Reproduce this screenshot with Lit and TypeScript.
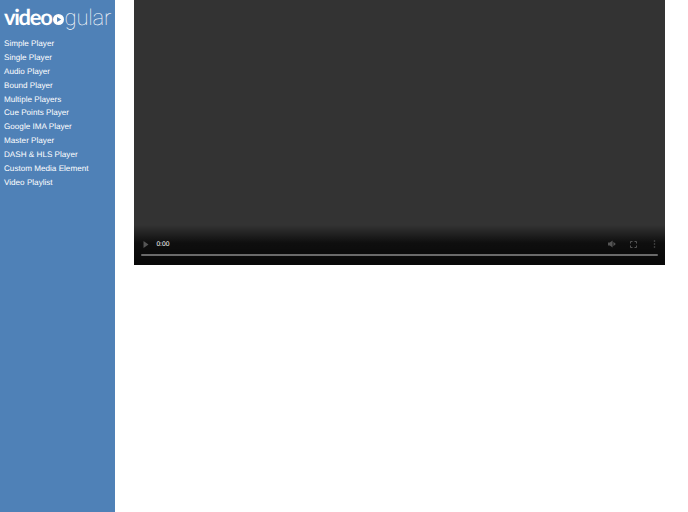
import { LitElement, html, css, svg } from "lit";
import { customElement } from "lit/decorators.js";

const LINKS = [
  "Simple Player",
  "Single Player",
  "Audio Player",
  "Bound Player",
  "Multiple Players",
  "Cue Points Player",
  "Google IMA Player",
  "Master Player",
  "DASH & HLS Player",
  "Custom Media Element",
  "Video Playlist",
];

@customElement("app-root")
export class AppRoot extends LitElement {
  static styles = css`
    :host {
      display: flex;
      width: 688px;
      height: 512px;
      overflow: hidden;
      background: #fff;
      font-family: "Liberation Sans", Arial, sans-serif;
      text-rendering: geometricPrecision;
    }
    .side {
      width: 115px;
      flex: none;
      background: #4f81b7;
      color: #fff;
    }
    .logo {
      height: 37px;
      box-sizing: border-box;
      padding: 5px 0 0 4px;
      display: flex;
      align-items: baseline;
      line-height: 24px;
      white-space: nowrap;
    }
    .bold {
      font-family: Lato, sans-serif;
      font-weight: 700;
      font-size: 22px;
      letter-spacing: -1.3px;
    }
    .thin {
      font-family: Roboto, sans-serif;
      font-weight: 100;
      font-size: 22px;
      letter-spacing: -0.2px;
    }
    .dot { width: 11px; height: 11px; flex: none; margin: 0 1px 0 1px; }
    ul {
      list-style: none;
      margin: 0;
      padding: 0 0 0 4px;
      font-size: 8.15px;
      line-height: 13.9px;
    }
    li { white-space: nowrap; height: 13.9px; }
    .main { flex: 1; padding-left: 19.4px; }
    .video {
      width: 531px;
      height: 265px;
      background: #333;
      display: flex;
      flex-direction: column;
      justify-content: flex-end;
    }
    .controls {
      height: 40px;
      background: linear-gradient(to bottom, rgba(0,0,0,0), rgba(0,0,0,.72) 45%, rgba(0,0,0,.85));
      padding: 0 7px 9px;
      box-sizing: border-box;
      display: flex;
      flex-direction: column;
      justify-content: flex-end;
      gap: 5px;
    }
    .row {
      display: flex;
      align-items: center;
      height: 10px;
      color: #fff;
      font-size: 6.7px;
    }
    .row svg { display: block; flex: none; }
    .play { margin-left: 2px; }
    .time { margin-left: 7px; }
    .grow { flex: 1; }
    .vol { margin-right: 14px; }
    .full { margin-right: 16px; }
    .more { margin-right: 2px; }
    .track { height: 2px; background: #6a6a6a; border-radius: 1px; }
  `;

  render() {
    const grey = "#555";
    return html`
      <aside class="side">
        <div class="logo">
          <span class="bold">video</span>
          <svg class="dot" viewBox="0 0 12 12">
            ${svg`<circle cx="6" cy="6" r="6" fill="#fff"></circle><path d="M4.4 3.2L9 6L4.4 8.8Z" fill="#4f81b7"></path>`}
          </svg>
          <span class="thin">gular</span>
        </div>
        <ul>
          ${LINKS.map((l) => html`<li>${l}</li>`)}
        </ul>
      </aside>
      <main class="main">
        <div class="video">
          <div class="controls">
            <div class="row">
              <svg class="play" width="6" height="7" viewBox="0 0 6 7">
                ${svg`<path d="M0.5 0L5.5 3.5L0.5 7Z" fill="${grey}"></path>`}
              </svg>
              <span class="time">0:00</span>
              <span class="grow"></span>
              <svg class="vol" width="8" height="8" viewBox="0 0 8 8">
                ${svg`<path d="M0 2.6H1.8L4.6 0.4V7.6L1.8 5.4H0Z M5.4 1.8L7.8 4L5.4 6.2Z" fill="${grey}"></path>`}
              </svg>
              <svg class="full" width="7" height="7" viewBox="0 0 7 7">
                ${svg`<path d="M0.5 2.5V0.5H2.5M4.5 0.5H6.5V2.5M6.5 4.5V6.5H4.5M2.5 6.5H0.5V4.5" fill="none" stroke="${grey}" stroke-width="1"></path>`}
              </svg>
              <svg class="more" width="3" height="8" viewBox="0 0 3 8">
                ${svg`<circle cx="1.5" cy="1" r=".8" fill="${grey}"></circle><circle cx="1.5" cy="4" r=".8" fill="${grey}"></circle><circle cx="1.5" cy="7" r=".8" fill="${grey}"></circle>`}
              </svg>
            </div>
            <div class="track"></div>
          </div>
        </div>
      </main>
    `;
  }
}
